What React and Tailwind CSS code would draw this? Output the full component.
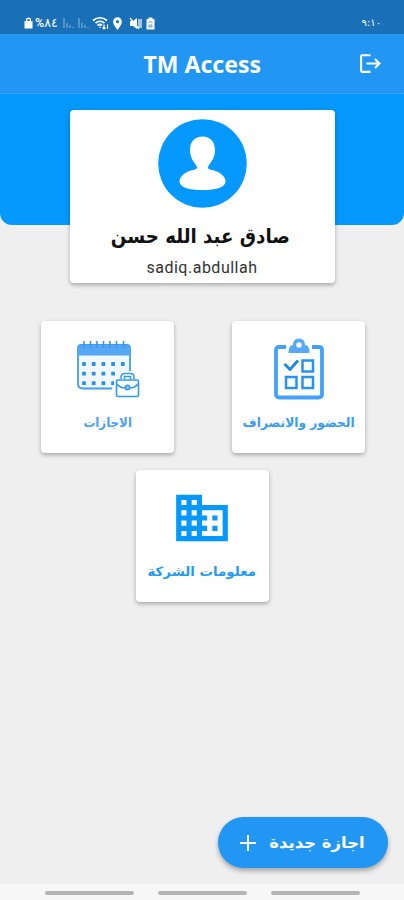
import { MdBusiness, MdLocationOn, MdLogout } from "react-icons/md";

const dotColumns = [8, 17.7, 27.4, 37.1, 46.8];
const dotRows = [24, 33.7, 43.2];

function CalendarIcon() {
  return (
    <svg width="64" height="58" viewBox="0 0 64 58" fill="none">
      <path
        d="M2 8Q2 5 5 5H51Q54 5 54 8V46Q54 49 50 49H7Q2 49 2 44Z"
        fill="#f0f7ff"
      />
      <path
        d="M54 31V8Q54 5 51 5H5Q2 5 2 8V44Q2 48.500 7 48.500H36"
        stroke="#3f9df3"
        strokeWidth="1.800"
      />
      <path d="M2 8Q2 5 5 5H51Q54 5 54 8V15.500H2Z" fill="#55a7f3" />
      <path
        d="M8 1V8M14.500 1V8M21 1V8M27.500 1V8M34 1V8M40.500 1V8M47.500 1V8"
        stroke="#3f95e3"
        strokeWidth="1.600"
      />
      {dotRows.map((y) =>
        dotColumns
          .filter((x) => y < 43 || x < 40)
          .map((x) => (
            <rect
              key={`${x}-${y}`}
              x={x - 1.9}
              y={y - 1.9}
              width="3.800"
              height="3.800"
              rx="0.600"
              fill="#2e8fe8"
            />
          ))
      )}
      <path
        d="M38 40Q38 37 42 37H44V35Q44 31 49 31H53Q57 31 57 35V37H60Q63 37 63 40V57H38Z"
        fill="white"
      />
      <rect
        x="40.500"
        y="40"
        width="22"
        height="16.500"
        rx="1.500"
        stroke="#3398ef"
        strokeWidth="1.600"
      />
      <path
        d="M45 39V37Q45 33.500 49 33.500H54Q58 33.500 58 37V39M48.500 39V36.500H54.500V39M41 44Q44 48 49.500 48M62 44Q59 48 53.500 48"
        stroke="#3398ef"
        strokeWidth="1.500"
      />
      <circle
        cx="51.500"
        cy="47.500"
        r="2.200"
        fill="#8bc6fa"
        stroke="#3398ef"
        strokeWidth="1.400"
      />
    </svg>
  );
}

function ChecklistIcon() {
  return (
    <svg
      width="52"
      height="64"
      viewBox="0 0 52 64"
      fill="none"
      stroke="#45a1f5"
    >
      <path
        d="M13 10H6Q3 10 3 13V57Q3 60.500 6.500 60.500H45.500Q49 60.500 49 57V13Q49 10 46 10H39"
        strokeWidth="3.800"
      />
      <path
        fillRule="evenodd"
        d="M15.500 16Q15.500 8 20 8Q20 1.500 26 1.500Q32 1.500 32 8Q36.500 8 36.500 16ZM26 5.300A2.700 2.700 0 1 0 26 10.700A2.700 2.700 0 1 0 26 5.300Z"
        fill="#55a9f5"
        stroke="none"
      />
      <path d="M11.500 27L17 32.500L25 23.500" stroke="#1688eb" strokeWidth="2.800" />
      <g stroke="#2992ee" strokeWidth="2.500">
        <rect x="29.500" y="23.500" width="10.500" height="11" />
        <rect x="13" y="40" width="10.500" height="11" />
        <rect x="29.500" y="40" width="10.500" height="11" />
      </g>
    </svg>
  );
}

function StatusBar() {
  return (
    <div className="h-[34px] shrink-0 bg-[#1a70b7] pt-[15px] pl-6 pr-[23px] flex justify-between text-white">
      <div className="flex h-4 items-center">
        <svg width="9" height="12" viewBox="0 0 9 12" fill="white">
          <path d="M2 4V2Q2 .5 4.500 .5T7 2V4H8.500V11.500H.5V4ZM3.300 4H5.700V2.200H3.300Z" />
        </svg>
        <div
          dir="ltr"
          className="ml-0.5 w-[23px] font-['Roboto','DejaVu_Sans',sans-serif] text-[12.5px] leading-4 font-medium whitespace-nowrap"
        >
          <bdo dir="ltr">%٨٤</bdo>
        </div>
        <svg
          className="ml-[5px]"
          width="27"
          height="12"
          viewBox="0 0 27 12"
          stroke="white"
          strokeWidth="1.300"
          opacity=".4"
        >
          <path d="M1 1V11M4 6V11M7 8V11M10 10V11M16 1V11M19 6V11M22 8V11M25 10V11" />
        </svg>
        <svg
          className="ml-[2px]"
          width="18"
          height="14"
          viewBox="0 0 18 14"
          fill="none"
          stroke="white"
          strokeWidth="1.700"
        >
          <path d="M1 4.500Q8 -1 15 4.500M3.500 7Q8 3.500 12.500 7M5.500 9.500Q8 7.500 10 9.500" />
          <path
            d="M8 10.500V12M12 8.500V13M10.500 11.500L12 13L13.500 11.500M15.500 13V8.500"
            strokeWidth="1.200"
          />
        </svg>
        <MdLocationOn size={15} />
        <svg className="ml-[4px]" width="14" height="13" viewBox="0 0 14 13">
          <path d="M1 4H4L8 1V12L4 9H1Z" fill="white" />
          <path
            d="M1 1L10 12M10 2V11M12 2V11"
            stroke="white"
            strokeWidth="1.200"
            fill="none"
          />
        </svg>
        <svg className="ml-[3px]" width="9" height="13" viewBox="0 0 9 13">
          <path d="M2.500 2V.5H6.500V2H8.500V12.500H.5V2Z" fill="white" />
          <path
            d="M2.500 6L4.500 4L6.500 6M3 8H6V10H3Z"
            stroke="#5b9dd5"
            fill="none"
          />
        </svg>
      </div>
      <div className="font-['DejaVu_Sans',sans-serif] text-[10px] leading-4">
        <bdo dir="ltr">٩:١٠</bdo>
      </div>
    </div>
  );
}

function MenuCard({ icon, label, labelClass }) {
  return (
    <button className="w-[133px] h-[132px] rounded-[4px] bg-white shadow-[0_2px_4px_rgba(0,0,0,0.3)] flex flex-col items-center">
      <div className="h-[88px] flex items-center justify-center pt-[7px]">
        {icon}
      </div>
      <div
        className={`mt-1 text-[13px] leading-5 font-bold whitespace-nowrap ${labelClass}`}
      >
        {label}
      </div>
    </button>
  );
}

export default function App() {
  return (
    <main
      dir="ltr"
      className="w-full h-[900px] overflow-hidden flex flex-col bg-[#efefef] font-['DejaVu_Sans',sans-serif]"
    >
      <StatusBar />

      {/* HEADER */}
      <header className="h-[60px] shrink-0 bg-[#2196f3] border-b border-[#3ca5f7] grid grid-cols-[1fr_auto_1fr] items-center">
        <div />
        <h1 className="font-['Noto_Sans',sans-serif] text-[24px] font-bold text-white leading-8 scale-x-[0.96]">
          TM Access
        </h1>
        <MdLogout className="justify-self-end mr-[21px] text-white" size={25} />
      </header>

      {/* PROFILE */}
      <section className="h-[131px] shrink-0 rounded-b-[12px] bg-[#0598ff] flex justify-center pt-4">
        <div className="w-[265px] h-[173px] shrink-0 rounded-[4px] bg-white shadow-[0_2px_4px_rgba(0,0,0,0.3)] flex flex-col items-center pt-[9px]">
          <svg width="89" height="89" viewBox="0 0 89 89">
            <circle cx="44.500" cy="44.500" r="44.300" fill="#0598ff" />
            <path
              d="M44.500 17.500C36.500 17.500 32 23 32 31C32 38 35 42 38 46Q40.500 49.500 37 50.500C28 52 21.500 57 21.500 62.500C21.500 68.500 31 71 44.500 71S67.500 68.500 67.500 62.500C67.500 57 61 52 52 50.500Q48.500 49.500 51 46C54 42 57 38 57 31C57 23 52.500 17.500 44.500 17.500Z"
              fill="white"
            />
          </svg>
          <h2
            dir="rtl"
            className="mt-[14px] mr-1 text-[20px] font-bold leading-7 text-[#111111] whitespace-nowrap scale-x-[0.91]"
          >
            صادق عبد الله حسن
          </h2>
          <p className="mt-[8px] font-['Roboto',sans-serif] text-[16px] leading-5 tracking-[0.5px] text-[#333333]">
            sadiq.abdullah
          </p>
        </div>
      </section>

      {/* MENU */}
      <section className="mt-[96px] flex flex-col items-center gap-[17px]">
        <div className="w-[324px] ml-[2px] flex justify-between">
          <MenuCard
            icon={<CalendarIcon />}
            label="الاجازات"
            labelClass="text-[#4ba1ee] scale-x-[0.91]"
          />
          <MenuCard
            icon={<ChecklistIcon />}
            label="الحضور والانصراف"
            labelClass="text-[#3c9cf1] scale-x-[0.94]"
          />
        </div>
        <MenuCard
          icon={<MdBusiness size={62} color="#0598ff" />}
          label="معلومات الشركة"
          labelClass="text-[#259aef] scale-x-[1.03]"
        />
      </section>

      <button className="mt-auto mb-4 mr-4 self-end shrink-0 w-[170px] h-[51px] rounded-full bg-[#2196f3] shadow-[0_3px_5px_rgba(0,0,0,0.3)] flex items-center text-white pl-[22px] pr-[23px] justify-between">
        <svg width="16" height="16" viewBox="0 0 16 16" stroke="white">
          <path d="M8 0V16M0 8H16" strokeWidth="2" />
        </svg>
        <span className="text-[16px] font-bold leading-6 whitespace-nowrap origin-right scale-x-[1.03]">
          اجازة جديدة
        </span>
      </button>

      {/* SYSTEM NAVIGATION */}
      <nav className="h-4 shrink-0 bg-[#f7f7f7] flex justify-center gap-6 pt-[7px]">
        <div className="w-[89px] h-1 rounded-full bg-[#b4b4b4]" />
        <div className="w-[89px] h-1 rounded-full bg-[#b4b4b4]" />
        <div className="w-[89px] h-1 rounded-full bg-[#b4b4b4]" />
      </nav>
    </main>
  );
}
